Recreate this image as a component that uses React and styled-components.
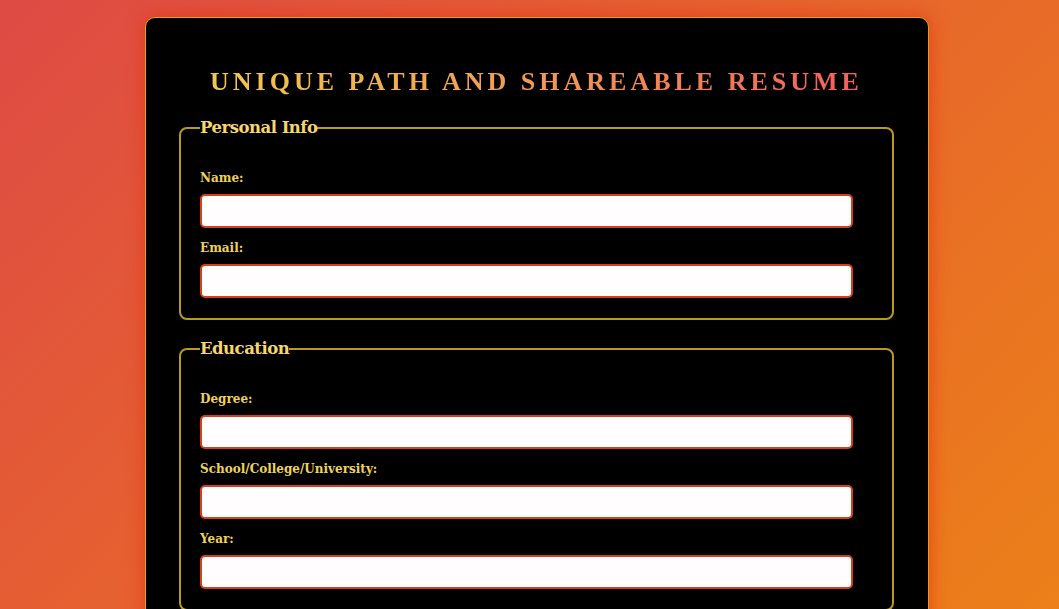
import React from "react";
import styled, { createGlobalStyle } from "styled-components";

const GlobalStyle = createGlobalStyle`
  html, body {
    margin: 0;
    padding: 0;
    height: 100%;
  }
  body {
    font-family: "Liberation Serif", "DejaVu Serif", serif;
    background: linear-gradient(135deg, #de4a45 0%, #e6622f 45%, #ec8019 100%);
    min-height: 609px;
    overflow: hidden;
  }
`;

const Page = styled.div`
  display: flex;
  justify-content: center;
  padding: 17px 0 0 15px;
`;

const Card = styled.div`
  width: 784px;
  box-sizing: border-box;
  background: #000;
  border: 1px solid #d9a030;
  border-radius: 10px;
  box-shadow: 0 0 18px rgba(230, 50, 20, 0.75);
  padding: 44px 34px 30px 33px;
`;

const Title = styled.h1`
  margin: 0 auto 16px;
  text-align: center;
  font-family: "Liberation Serif", serif;
  font-size: 26px;
  font-weight: 700;
  letter-spacing: 4px;
  text-transform: uppercase;
  line-height: 40px;
  background: linear-gradient(90deg, #f2c850 0%, #f09a55 50%, #f0605d 100%);
  -webkit-background-clip: text;
  background-clip: text;
  color: transparent;
  width: fit-content;
`;

const Fieldset = styled.fieldset`
  margin: 0 0 19px;
  border: 2px solid #b89a1c;
  border-radius: 8px;
  padding: 33px 39px 20px 19px;
`;

const Legend = styled.legend`
  padding: 0;
  color: #f7d66a;
  font-size: 16.5px;
  font-weight: 700;
  font-family: "DejaVu Serif", serif;
  letter-spacing: -0.5px;
`;

const Label = styled.label`
  display: block;
  color: #eed25c;
  font-family: "DejaVu Serif", serif;
  font-size: 12px;
  font-weight: 700;
  line-height: 16px;
  margin-bottom: 8px;
`;

const Input = styled.input`
  display: block;
  box-sizing: border-box;
  width: 100%;
  height: 34px;
  margin-bottom: 12px;
  border: 2px solid #d4401c;
  border-radius: 5px;
  background: #fffdfd;
  outline: none;
  &:last-child {
    margin-bottom: 0;
  }
`;

const Field = ({ label }) => (
  <>
    <Label>{label}</Label>
    <Input type="text" />
  </>
);

export default function App() {
  return (
    <>
      <GlobalStyle />
      <Page>
        <Card>
          <Title>Unique Path and Shareable Resume</Title>
          <Fieldset>
            <Legend>Personal Info</Legend>
            <Field label="Name:" />
            <Field label="Email:" />
          </Fieldset>
          <Fieldset>
            <Legend>Education</Legend>
            <Field label="Degree:" />
            <Field label="School/College/University:" />
            <Field label="Year:" />
          </Fieldset>
        </Card>
      </Page>
    </>
  );
}
